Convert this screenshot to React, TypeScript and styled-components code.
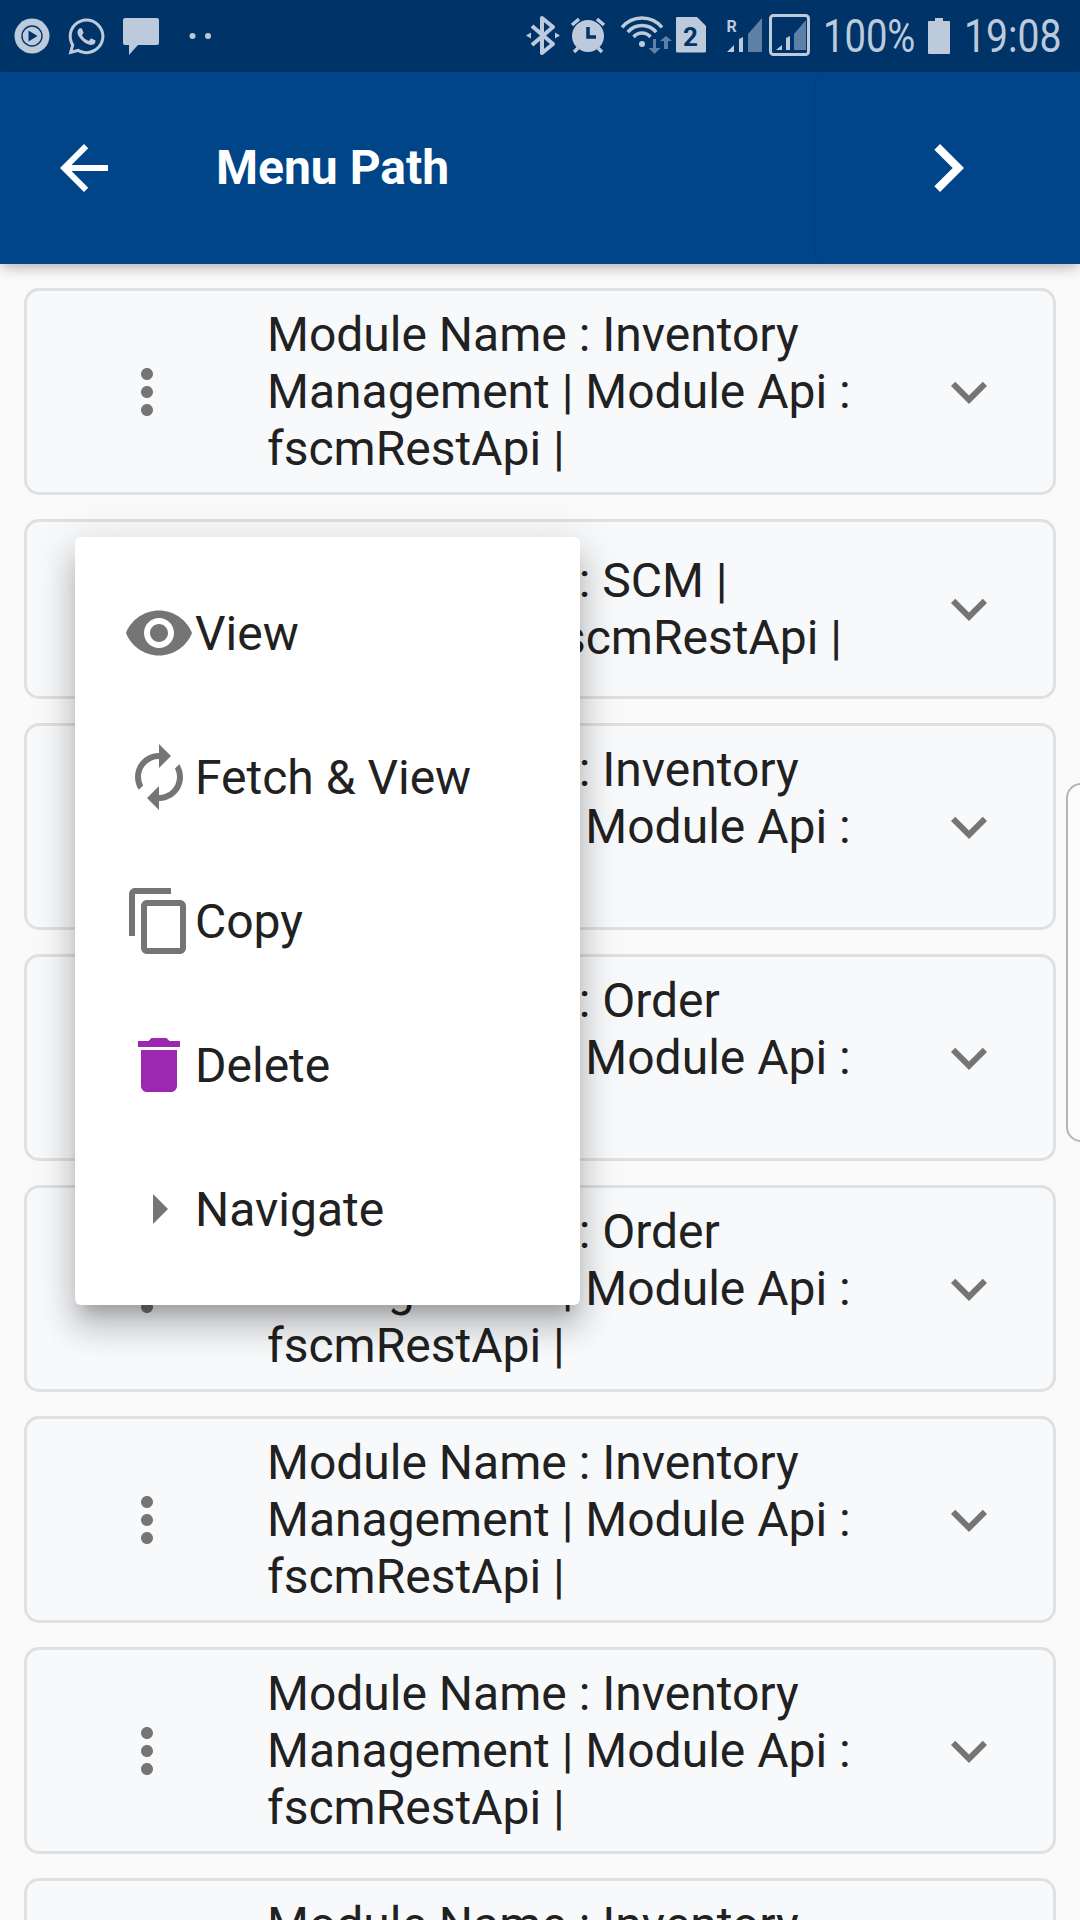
import React from "react";
import styled, { createGlobalStyle } from "styled-components";
import { FaWhatsapp } from "react-icons/fa";
import {
  MdArrowBack,
  MdArrowRight,
  MdAutorenew,
  MdChevronRight,
  MdContentCopy,
  MdDelete,
  MdExpandMore,
  MdMoreVert,
  MdVisibility,
} from "react-icons/md";

const BAR = "#003468";
const ICON = "#bccadb";
const DIM = "#5f80a6";

const GlobalStyle = createGlobalStyle`
  html, body {
    margin: 0;
    padding: 0;
    background: #fafafa;
  }
  * {
    box-sizing: border-box;
  }
`;

const Page = styled.div`
  position: relative;
  width: 1080px;
  height: 1920px;
  overflow: hidden;
  background: #fafafa;
  font-family: Roboto, "Liberation Sans", sans-serif;
  color: #212121;
`;

const StatusBar = styled.div`
  height: 72px;
  background: ${BAR};
  display: flex;
  justify-content: space-between;
  align-items: center;
`;

const StatusGroup = styled.div<{ $pad: string }>`
  display: flex;
  align-items: center;
  height: 72px;
  padding: ${(p) => p.$pad};
`;

const StatusIcon = styled.svg<{ $ml?: number }>`
  display: block;
  height: 72px;
  flex: none;
  margin-left: ${(p) => p.$ml || 0}px;
`;

const WhatsappIcon = styled(FaWhatsapp)`
  display: block;
  flex: none;
  font-size: 41px;
  color: ${ICON};
  margin: 0 15px 0 13px;
`;

const StatusText = styled.span<{ $w: number; $sx: number; $ml: number; $mr?: number }>`
  display: block;
  flex: none;
  width: ${(p) => p.$w}px;
  margin-left: ${(p) => p.$ml}px;
  margin-right: ${(p) => p.$mr || 0}px;
  font-size: 46px;
  font-weight: 400;
  line-height: 72px;
  color: ${ICON};
  white-space: nowrap;
  transform: scaleX(${(p) => p.$sx});
  transform-origin: left center;
`;

const Header = styled.header`
  position: relative;
  height: 192px;
  background: #004588;
  display: flex;
  align-items: center;
  box-shadow: 0 6px 12px -3px rgba(0, 0, 0, 0.2), 0 4px 15px rgba(0, 0, 0, 0.1);
`;

const BackButton = styled.div`
  flex: none;
  width: 72px;
  margin-left: 48px;
  font-size: 72px;
  line-height: 0;
  color: #fff;
`;

const Title = styled.h1`
  flex: 1;
  margin: 0 0 0 96px;
  font-size: 48px;
  font-weight: 700;
  line-height: 60px;
  color: #fff;
`;

const ForwardButton = styled.div`
  flex: none;
  width: 266px;
  height: 192px;
  display: flex;
  align-items: center;
  justify-content: center;
  font-size: 96px;
  color: #fff;
  background: #004589;
  border: 1px solid #003f7d;
  border-width: 0 0 0 1px;
  border-radius: 18px;
`;

const List = styled.div`
  display: flex;
  flex-direction: column;
  gap: 24px;
  padding: 24px 24px 0;
`;

const Card = styled.div`
  flex: none;
  min-height: 180px;
  display: flex;
  align-items: center;
  padding: 15px 48px 15px 84px;
  background: #f8f9fb;
  border: 3px solid #dfe0e2;
  border-radius: 15px;
`;

const CardIcon = styled.div`
  flex: none;
  width: 72px;
  height: 72px;
  font-size: 72px;
  line-height: 0;
  color: #757575;
`;

const CardText = styled.div`
  flex: none;
  width: 612px;
  margin: 0 54px 0 84px;
  font-size: 48px;
  line-height: 57px;
`;

const EdgeHandle = styled.div`
  position: absolute;
  top: 783px;
  left: 1066px;
  width: 30px;
  height: 359px;
  background: #fbfbfb;
  border: 2px solid #b4b4b4;
  border-radius: 24px;
`;

const Menu = styled.div`
  position: absolute;
  top: 537px;
  left: 75px;
  width: 505px;
  height: 768px;
  padding: 24px 0;
  background: #fff;
  border-radius: 6px;
  box-shadow: 0 15px 15px -9px rgba(0, 0, 0, 0.2), 0 24px 30px 3px rgba(0, 0, 0, 0.14),
    0 9px 42px 6px rgba(0, 0, 0, 0.12);
`;

const MenuItem = styled.div`
  height: 144px;
  display: flex;
  align-items: center;
  padding-left: 48px;
`;

const MenuIcon = styled.div<{ $color?: string }>`
  flex: none;
  width: 72px;
  height: 72px;
  font-size: 72px;
  line-height: 0;
  color: ${(p) => p.$color || "#757575"};
`;

const MenuLabel = styled.span`
  font-size: 48px;
  line-height: 57px;
`;

const cards = [
  "Module Name : Inventory Management | Module Api : fscmRestApi |",
  "Module Name : SCM | Module Api : fscmRestApi |",
  "Module Name : Inventory Management | Module Api : fscmRestApi |",
  "Module Name : Order Management | Module Api : fscmRestApi |",
  "Module Name : Order Management | Module Api : fscmRestApi |",
  "Module Name : Inventory Management | Module Api : fscmRestApi |",
  "Module Name : Inventory Management | Module Api : fscmRestApi |",
  "Module Name : Inventory Management | Module Api : fscmRestApi |",
];

const menu = [
  { label: "View", icon: <MdVisibility /> },
  { label: "Fetch & View", icon: <MdAutorenew /> },
  { label: "Copy", icon: <MdContentCopy /> },
  { label: "Delete", icon: <MdDelete />, color: "#9c27b0" },
  { label: "Navigate", icon: <MdArrowRight /> },
];

const App: React.FC = () => {
  return (
    <Page>
      <GlobalStyle />
      <StatusBar>
        <StatusGroup $pad="0 0 0 12px">
          <StatusIcon viewBox="0 0 41 72" width={41}>
            <circle cx="20" cy="36" r="17.5" fill={ICON} />
            <circle cx="20" cy="36" r="10" fill="none" stroke={BAR} strokeWidth="1.4" />
            <path d="M16.5 30.5v11l9-5.5z" fill={BAR} />
          </StatusIcon>
          <WhatsappIcon />
          <StatusIcon viewBox="0 0 40 72" width={40}>
            <path
              d="M3 18h32a2 2 0 0 1 2 2v23a2 2 0 0 1-2 2H16L7 55V45H3a2 2 0 0 1-2-2V20a2 2 0 0 1 2-2z"
              fill={ICON}
            />
          </StatusIcon>
          <StatusIcon viewBox="0 0 60 72" width={60} $ml={5}>
            <circle cx="25.5" cy="36" r="3" fill={ICON} />
            <circle cx="41" cy="36" r="3" fill={ICON} />
          </StatusIcon>
        </StatusGroup>
        <StatusGroup $pad="0">
          <StatusIcon viewBox="0 0 40 72" width={40}>
            <path
              d="M8 26l21 18-11 9V18l11 9L8 45"
              fill="none"
              stroke={ICON}
              strokeWidth="4"
              strokeLinejoin="round"
            />
            <path d="M2 35.500l5-3v6zM36 35.500l-5-3v6z" fill={ICON} />
          </StatusIcon>
          <StatusIcon viewBox="0 0 46 72" width={46}>
            <circle cx="24" cy="36" r="16" fill={ICON} />
            <path d="M24 27v10h8" fill="none" stroke={BAR} strokeWidth="3.500" />
            <path
              d="M8 25l7-6M33 19l7 6M10 52l4-4M38 52l-4-4"
              fill="none"
              stroke={ICON}
              strokeWidth="3.500"
            />
          </StatusIcon>
          <StatusIcon viewBox="0 0 60 72" width={60} $ml={2}>
            <g fill="none" stroke={ICON} strokeWidth="3.500">
              <path d="M10 27.300A26 26 0 0 1 50 27.300" />
              <path d="M15.800 32.100A18.500 18.500 0 0 1 44.200 32.100" />
              <path d="M21.600 37A11 11 0 0 1 38.400 37" />
            </g>
            <circle cx="30" cy="44" r="3" fill={ICON} />
            <path d="M41 39v9h-4.500l6 6 6-6H44v-9zM52 49v-8h-4l6-5 6 5h-4v8z" fill={DIM} />
          </StatusIcon>
          <StatusIcon viewBox="0 0 34 72" width={34} $ml={2}>
            <path
              d="M3 17h20l9 9v25a1.500 1.500 0 0 1-1.500 1.500h-27A1.500 1.500 0 0 1 2 51V18a1 1 0 0 1 1-1z"
              fill={ICON}
            />
            <text
              x="16.500"
              y="46"
              textAnchor="middle"
              fontFamily="Roboto, sans-serif"
              fontWeight="700"
              fontSize="26"
              fill={BAR}
            >
              2
            </text>
          </StatusIcon>
          <StatusIcon viewBox="0 0 44 72" width={44} $ml={14}>
            <text x="4.500" y="32" fontFamily="Roboto, sans-serif" fontWeight="700" fontSize="16" fill={ICON}>
              R
            </text>
            <path d="M5 52l7-7v7zM17 39l4-2v15h-4z" fill={ICON} />
            <path d="M26 34l14-16v34H26z" fill={DIM} />
          </StatusIcon>
          <StatusIcon viewBox="0 0 48 72" width={48}>
            <rect x="4.500" y="15.500" width="38" height="39" rx="3" fill="none" stroke={ICON} strokeWidth="3" />
            <path d="M10 50l6-5v5zM20 38l4-2v14h-4z" fill={ICON} />
            <path d="M28 34l12-14v30H28z" fill={DIM} />
          </StatusIcon>
          <StatusText $w={91} $sx={0.83} $ml={9}>
            100%
          </StatusText>
          <StatusIcon viewBox="0 0 26 72" width={26} $ml={12}>
            <path d="M9 18h8v3h6a1 1 0 0 1 1 1v31a1 1 0 0 1-1 1H3a1 1 0 0 1-1-1V22a1 1 0 0 1 1-1h6z" fill={ICON} />
          </StatusIcon>
          <StatusText $w={96} $sx={0.85} $ml={12} $mr={20}>
            19:08
          </StatusText>
        </StatusGroup>
      </StatusBar>
      <Header>
        <BackButton>
          <MdArrowBack />
        </BackButton>
        <Title>Menu Path</Title>
        <ForwardButton>
          <MdChevronRight />
        </ForwardButton>
      </Header>
      <List>
        {cards.map((text, i) => (
          <Card key={i}>
            <CardIcon>
              <MdMoreVert />
            </CardIcon>
            <CardText>{text}</CardText>
            <CardIcon>
              <MdExpandMore />
            </CardIcon>
          </Card>
        ))}
      </List>
      <EdgeHandle />
      <Menu>
        {menu.map((item) => (
          <MenuItem key={item.label}>
            <MenuIcon $color={item.color}>{item.icon}</MenuIcon>
            <MenuLabel>{item.label}</MenuLabel>
          </MenuItem>
        ))}
      </Menu>
    </Page>
  );
};

export default App;
